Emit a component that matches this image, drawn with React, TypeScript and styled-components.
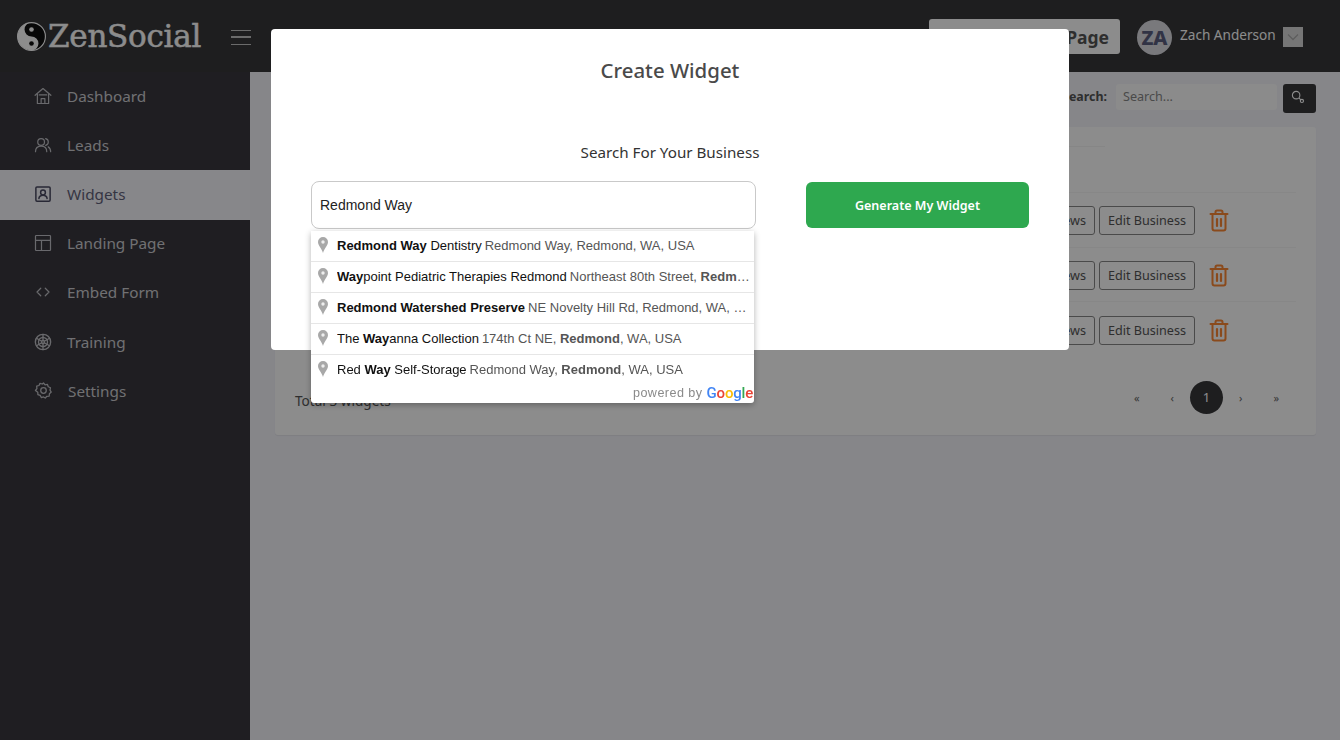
import React from "react";
import styled, { createGlobalStyle } from "styled-components";

const Global = createGlobalStyle`
  html, body { margin: 0; padding: 0; height: 100%; background: #f4f4fa; }
  body { font-family: "Noto Sans", "Open Sans", sans-serif; overflow: hidden; }
  * { box-sizing: border-box; }
`;

const Page = styled.div`
  width: 1340px;
  height: 740px;
  display: flex;
  flex-direction: column;
  overflow: hidden;
`;
const Topbar = styled.header`
  height: 72px;
  flex: none;
  background: #37373a;
  display: flex;
  align-items: center;
  padding-right: 37px;
`;
const Brand = styled.div`
  width: 231px;
  padding-left: 17px;
  display: flex;
  align-items: center;
  gap: 2px;
  color: #fff;
`;
const BrandName = styled.span`
  font-family: "DejaVu Serif", serif;
  font-size: 31px;
  letter-spacing: -0.25px;
  line-height: 1;
  -webkit-text-stroke: 0.5px #fff;
`;
const Burger = styled.button`
  width: 20px;
  height: 15px;
  padding: 0;
  border: 0;
  background: none;
  border-top: 1.5px solid #c4c4c4;
  border-bottom: 1.5px solid #c4c4c4;
  display: flex;
  align-items: center;
  margin-top: 2px;
  &::before {
    content: "";
    width: 100%;
    height: 1.5px;
    background: #c4c4c4;
  }
`;
const Spacer = styled.div`
  flex: 1;
`;
const LandingButton = styled.button`
  width: 191px;
  height: 35px;
  margin-top: 1px;
  border: 0;
  border-radius: 3px;
  background: #fff;
  color: #555;
  font-family: inherit;
  font-weight: 700;
  font-size: 17.5px;
  text-align: right;
  padding: 0 11px 0 0;
  white-space: nowrap;
`;
const Avatar = styled.div`
  width: 35px;
  height: 35px;
  margin-left: 17px;
  margin-top: 3px;
  border-radius: 50%;
  background: #dcdce2;
  color: #5a5e7e;
  font-weight: 800;
  font-size: 20px;
  display: flex;
  align-items: center;
  justify-content: center;
`;
const UserName = styled.span`
  margin-left: 8px;
  color: #fff;
  font-size: 13.6px;
  width: 103px;
  margin-top: -4px;
`;
const UserCaret = styled.div`
  width: 20px;
  height: 20px;
  background: #d8d8d8;
  display: flex;
  align-items: center;
  justify-content: center;
  color: #aaa;
  margin-top: 1px;
`;
const Body = styled.div`
  flex: 1;
  display: flex;
  min-height: 0;
`;
const Sidebar = styled.nav`
  width: 250px;
  flex: none;
  background: #39383e;
  display: flex;
  flex-direction: column;
`;
const NavItem = styled.a<{ $active?: boolean }>`
  height: 49.2px;
  display: flex;
  align-items: center;
  gap: 15px;
  padding: 0 0 2px 34px;
  font-size: 15.3px;
  color: ${(p) => (p.$active ? "#62627a" : "#cdcdd2")};
  background: ${(p) => (p.$active ? "#f6f6fc" : "transparent")};
  & > svg {
    flex: none;
    color: ${(p) => (p.$active ? "#4a4a62" : "#c0c0c6")};
  }
`;
const Main = styled.main`
  flex: 1;
  min-width: 0;
  background: #f4f4fa;
  padding: 12px 24px 0 25px;
  display: flex;
  flex-direction: column;
`;
const SearchRow = styled.div`
  height: 43px;
  display: flex;
  justify-content: flex-end;
  align-items: flex-start;
`;
const SearchLabel = styled.label`
  font-size: 12.4px;
  font-weight: 700;
  color: #555;
  margin: 4px 9px 0 0;
`;
const SearchInput = styled.input`
  width: 161px;
  height: 26px;
  border: 0;
  border-radius: 3px;
  background: #fdfdfd;
  padding: 0 7px 2px;
  font-family: inherit;
  font-size: 12.6px;
  margin-right: 6px;
  &::placeholder {
    color: #888;
  }
`;
const SearchButton = styled.button`
  width: 33px;
  height: 29px;
  padding: 0 3px 3px 0;
  border: 0;
  border-radius: 3px;
  background: #37373a;
  color: #fff;
  display: flex;
  align-items: center;
  justify-content: center;
`;
const Card = styled.section`
  height: 308px;
  background: #fff;
  border-radius: 3px;
  padding: 0 20px;
  display: flex;
  flex-direction: column;
  box-shadow: 0 1px 1px rgba(0, 0, 0, 0.06);
`;
const CardHeading = styled.div`
  height: 66px;
  flex: none;
  border-bottom: 1px solid #f6f6f6;
`;
const HeadingRule = styled.div`
  width: 100px;
  height: 20px;
  margin-left: auto;
  margin-right: 191px;
  border-bottom: 1px solid #f4f4f4;
`;
const Row = styled.div`
  height: 54.5px;
  flex: none;
  display: flex;
  align-items: center;
  justify-content: flex-end;
  gap: 4px;
  padding: 2px 67px 0 0;
  border-bottom: 1px solid #f6f6f6;
  &:nth-child(4) {
    border-bottom: 0;
  }
`;
const RowButton = styled.button`
  height: 29px;
  border: 1px solid #888;
  border-radius: 3px;
  background: #fff;
  color: #555;
  font-family: inherit;
  font-size: 12.6px;
  padding: 0 8px;
  white-space: nowrap;
`;
const DeleteIcon = styled.span`
  display: flex;
  color: #fb8733;
  margin: 0 0 0 10px;
  width: 20px;
`;
const CardFooter = styled.div`
  flex: 1;
  display: flex;
  align-items: center;
  justify-content: space-between;
  padding-top: 3px;
`;
const TotalText = styled.span`
  font-size: 13.6px;
  color: #555;
  margin-top: 6px;
`;
const Pager = styled.div`
  display: flex;
  align-items: center;
  padding-right: 2px;
`;
const PageLink = styled.span<{ $current?: boolean }>`
  width: ${(p) => (p.$current ? "33px" : "35.5px")};
  height: 33px;
  border-radius: 50%;
  display: flex;
  align-items: center;
  justify-content: center;
  font-size: ${(p) => (p.$current ? "13px" : "11px")};
  color: ${(p) => (p.$current ? "#fff" : "#666")};
  background: ${(p) => (p.$current ? "#37373a" : "transparent")};
`;
const Backdrop = styled.div`
  position: fixed;
  inset: 0;
  background: rgba(0, 0, 0, 0.45);
  display: flex;
  justify-content: center;
  align-items: flex-start;
  padding-top: 29px;
`;
const Modal = styled.div`
  width: 798px;
  height: 321px;
  background: #fff;
  border-radius: 4px;
  padding: 0 40px;
  display: flex;
  flex-direction: column;
`;
const ModalTitle = styled.h2`
  margin: 28px 0 0;
  height: 27px;
  line-height: 27px;
  font-size: 20.4px;
  font-weight: 500;
  color: #4a4a4a;
  text-align: center;
`;
const FormCaption = styled.p`
  margin: 58px 0 0;
  height: 20px;
  line-height: 20px;
  font-size: 15.2px;
  color: #333;
  text-align: center;
`;
const FormGrid = styled.div`
  margin-top: 19px;
  display: grid;
  grid-template-columns: 445px 223px;
  column-gap: 50px;
  align-items: start;
`;
const InputWrap = styled.div`
  position: relative;
`;
const PlaceInput = styled.input`
  width: 100%;
  height: 48px;
  border: 1px solid #c9c9c9;
  border-radius: 8px;
  padding: 0 8px;
  font-family: "Liberation Sans", Arial, sans-serif;
  font-size: 14px;
  color: #222;
  outline: none;
`;
const GenerateButton = styled.button`
  margin-top: 1px;
  height: 46px;
  border: 0;
  border-radius: 6px;
  background: #2ea84f;
  color: #fff;
  font-family: inherit;
  font-weight: 600;
  font-size: 12.5px;
`;
const Suggestions = styled.div`
  position: absolute;
  top: 50px;
  left: 0;
  width: 443px;
  height: 172px;
  background: #fff;
  border-radius: 0 0 3px 3px;
  box-shadow: 0 2px 6px rgba(0, 0, 0, 0.3);
  font-family: "Liberation Sans", Arial, sans-serif;
  font-size: 13px;
`;
const Suggestion = styled.div`
  height: 31px;
  padding: 0 3px 2px 7px;
  display: flex;
  align-items: center;
  gap: 9px;
  border-top: 1px solid #e6e6e6;
  &:first-child {
    height: 30px;
    border-top: 0;
  }
`;
const SuggestionText = styled.span`
  flex: 1;
  min-width: 0;
  overflow: hidden;
  white-space: nowrap;
  text-overflow: ellipsis;
  color: #555;
  b {
    font-weight: 700;
  }
`;
const MainText = styled.span`
  color: #111;
  margin-right: 3px;
`;
const PoweredBy = styled.div`
  display: flex;
  justify-content: flex-end;
  align-items: center;
  gap: 4px;
  height: 15px;
  padding-right: 1px;
  font-size: 12.6px;
  color: #8a8a8a;
  letter-spacing: 0.45px;
`;
const GoogleWord = styled.span`
  font-size: 15px;
  font-weight: 500;
  font-family: "Roboto", "Liberation Sans", sans-serif;
  letter-spacing: -0.2px;
`;
const Letter = styled.span<{ $c: string }>`
  color: ${(p) => p.$c};
`;

const I = { width: 18, height: 18, viewBox: "0 0 24 24", fill: "none", stroke: "currentColor", strokeWidth: 1.6, strokeLinecap: "round" as const, strokeLinejoin: "round" as const };

const HomeIcon = () => (
  <svg {...I}>
    <path d="M1.500 11 12 2l10.500 9" />
    <path d="M4.500 9V22h15V9" />
    <path d="M9.500 22v-6.500h5V22" />
    <path d="M7 10.500h10" />
  </svg>
);
const UsersIcon = () => (
  <svg {...I}>
    <circle cx="9.500" cy="8" r="4.500" />
    <path d="M2 21c0-4.500 3-7.500 7.500-7.500S17 16.500 17 21" />
    <path d="M15.500 3.600a4.500 4.500 0 0 1 0 8.800" />
    <path d="M19 14.500c2 1.200 3.200 3.500 3.200 6.500" />
  </svg>
);
const PortraitIcon = () => (
  <svg {...I} strokeWidth={2}>
    <rect x="2.500" y="2.500" width="19" height="19" rx="1.500" />
    <circle cx="12" cy="10" r="3.200" />
    <path d="M6.500 18c.5-2.800 2.800-4.200 5.500-4.200s5 1.400 5.500 4.200" />
  </svg>
);
const LayoutIcon = () => (
  <svg {...I}>
    <rect x="2" y="2" width="20" height="20" rx="1" />
    <path d="M2 8.500h20M10 8.500V22" />
  </svg>
);
const CodeIcon = () => (
  <svg {...I}>
    <path d="m9 7-5 5 5 5M15 7l5 5-5 5" />
  </svg>
);
const ReelIcon = () => (
  <svg {...I} strokeWidth={1.8}>
    <circle cx="12" cy="12" r="10.200" />
    <circle cx="12" cy="12" r="6" />
    <circle cx="12" cy="12" r="2" />
    <path d="M12 2v8M12 14v8M3.300 7l7 4M13.700 13l7 4M20.700 7l-7 4M10.300 13l-7 4" />
  </svg>
);
const GearIcon = () => (
  <svg {...I} width={19} height={19}>
    <path d="M12 2.500l2 2.300 3-.4 1 2.900 2.800 1.200-.6 3 1.600 2.500-2.300 2-.3 3-3 .3-2 2.300-2.200-1.500-2.800.8-1.400-2.700-2.900-1-.1-3L1.800 12l1.900-2.400-.3-3 2.900-.9 1.300-2.700 2.900.8z" />
    <circle cx="12" cy="12" r="3.500" />
  </svg>
);
const TrashIcon = () => (
  <svg width="20" height="23" viewBox="0 0 20 23" fill="none" stroke="currentColor" strokeWidth="2" strokeLinecap="round" strokeLinejoin="round">
    <path d="M1.500 5h17" />
    <path d="M6.500 5V3a1.500 1.500 0 0 1 1.500-1.500h4A1.500 1.500 0 0 1 13.500 3v2" />
    <path d="M3.500 5v14.500A2 2 0 0 0 5.500 21.500h9a2 2 0 0 0 2-2V5" />
    <path d="M8 10v7M12 10v7" strokeWidth="2.200" />
  </svg>
);
const KeySearchIcon = () => (
  <svg width="14" height="14" viewBox="0 0 15 15" fill="none" stroke="currentColor" strokeWidth="1.200">
    <circle cx="5.500" cy="5.500" r="4" />
    <path d="m8.500 8.500 2 2" />
    <circle cx="11.700" cy="11.700" r="1.700" />
  </svg>
);
const PinIcon = () => (
  <svg width="10" height="16" viewBox="0 0 10 16" style={{ flex: "none" }}>
    <path d="M5 0a5 5 0 0 0-5 5c0 3.500 3.600 6 5 11 1.400-5 5-7.500 5-11a5 5 0 0 0-5-5z" fill="#a8a8a8" />
    <circle cx="5" cy="5" r="1.700" fill="#eee" />
  </svg>
);
const YinYang = () => (
  <svg width="29" height="29" viewBox="0 0 100 100">
    <circle cx="50" cy="50" r="48" fill="#0f0f0f" stroke="#fff" strokeWidth="4" />
    <path d="M50 2a48 48 0 0 0 0 96 24 24 0 0 0 0-48 24 24 0 0 1 0-48z" fill="#fff" />
    <circle cx="50" cy="26" r="8" fill="#fff" />
    <circle cx="50" cy="74" r="8" fill="#0f0f0f" />
  </svg>
);
const CaretIcon = () => (
  <svg width="12" height="8" viewBox="0 0 12 8" fill="none" stroke="currentColor" strokeWidth="1.300">
    <path d="m1 1.500 5 5 5-5" />
  </svg>
);

const navItems = [
  { label: "Dashboard", icon: <HomeIcon /> },
  { label: "Leads", icon: <UsersIcon /> },
  { label: "Widgets", icon: <PortraitIcon />, active: true },
  { label: "Landing Page", icon: <LayoutIcon /> },
  { label: "Embed Form", icon: <CodeIcon /> },
  { label: "Training", icon: <ReelIcon /> },
  { label: "Settings", icon: <GearIcon /> },
];

const suggestions: { main: React.ReactNode; rest: React.ReactNode }[] = [
  { main: <><b>Redmond Way</b> Dentistry</>, rest: "Redmond Way, Redmond, WA, USA" },
  { main: <><b>Way</b>point Pediatric Therapies Redmond</>, rest: <>Northeast 80th Street, <b>Redmond</b>, WA, USA</> },
  { main: <b>Redmond Watershed Preserve</b>, rest: "NE Novelty Hill Rd, Redmond, WA, USA" },
  { main: <>The <b>Way</b>anna Collection</>, rest: <>174th Ct NE, <b>Redmond</b>, WA, USA</> },
  { main: <>Red <b>Way</b> Self-Storage</>, rest: <>Redmond Way, <b>Redmond</b>, WA, USA</> },
];

export default function App() {
  return (
    <Page>
      <Global />
      <Topbar>
        <Brand>
          <YinYang />
          <BrandName>ZenSocial</BrandName>
        </Brand>
        <Burger aria-label="Menu" />
        <Spacer />
        <LandingButton>View Landing Page</LandingButton>
        <Avatar>ZA</Avatar>
        <UserName>Zach Anderson</UserName>
        <UserCaret><CaretIcon /></UserCaret>
      </Topbar>
      <Body>
        <Sidebar>
          {navItems.map((n) => (
            <NavItem key={n.label} $active={n.active}>
              {n.icon}
              {n.label}
            </NavItem>
          ))}
        </Sidebar>
        <Main>
          <SearchRow>
            <SearchLabel>Search:</SearchLabel>
            <SearchInput placeholder="Search..." />
            <SearchButton aria-label="Search"><KeySearchIcon /></SearchButton>
          </SearchRow>
          <Card>
            <CardHeading><HeadingRule /></CardHeading>
            {[0, 1, 2].map((i) => (
              <Row key={i}>
                <RowButton>View Reviews</RowButton>
                <RowButton>Edit Business</RowButton>
                <DeleteIcon><TrashIcon /></DeleteIcon>
              </Row>
            ))}
            <CardFooter>
              <TotalText>Total 3 widgets</TotalText>
              <Pager>
                <PageLink>«</PageLink>
                <PageLink>‹</PageLink>
                <PageLink $current>1</PageLink>
                <PageLink>›</PageLink>
                <PageLink>»</PageLink>
              </Pager>
            </CardFooter>
          </Card>
        </Main>
      </Body>
      <Backdrop>
        <Modal>
          <ModalTitle>Create Widget</ModalTitle>
          <FormCaption>Search For Your Business</FormCaption>
          <FormGrid>
            <InputWrap>
              <PlaceInput defaultValue="Redmond Way" />
              <Suggestions>
                {suggestions.map((s, i) => (
                  <Suggestion key={i}>
                    <PinIcon />
                    <SuggestionText>
                      <MainText>{s.main}</MainText>
                      {s.rest}
                    </SuggestionText>
                  </Suggestion>
                ))}
                <PoweredBy>
                  powered by
                  <GoogleWord>
                    <Letter $c="#4285f4">G</Letter>
                    <Letter $c="#ea4335">o</Letter>
                    <Letter $c="#fbbc05">o</Letter>
                    <Letter $c="#4285f4">g</Letter>
                    <Letter $c="#34a853">l</Letter>
                    <Letter $c="#ea4335">e</Letter>
                  </GoogleWord>
                </PoweredBy>
              </Suggestions>
            </InputWrap>
            <GenerateButton>Generate My Widget</GenerateButton>
          </FormGrid>
        </Modal>
      </Backdrop>
    </Page>
  );
}
